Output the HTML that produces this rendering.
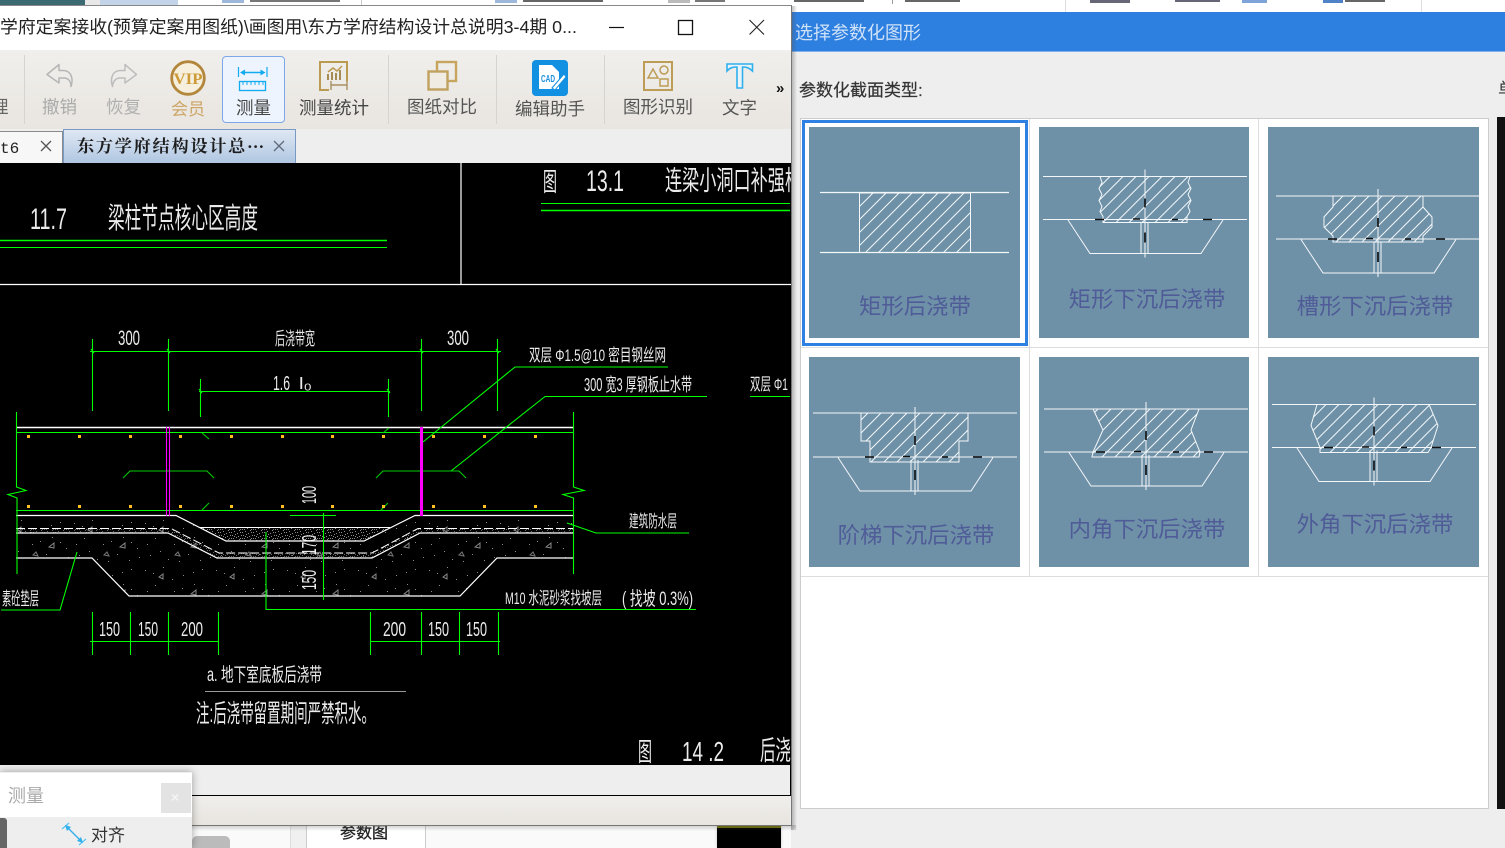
<!DOCTYPE html>
<html lang="zh"><head><meta charset="utf-8"><title>选择参数化图形</title>
<style>
html,body{margin:0;padding:0;background:#eee}
html{width:1505px;height:848px;overflow:hidden}
body{width:1505px;height:848px;overflow:hidden;position:relative;font-family:"Liberation Sans","Noto Sans CJK SC",sans-serif}
div{position:absolute;box-sizing:border-box}
.t{white-space:nowrap;line-height:1}
svg{position:absolute;left:0;top:0;overflow:hidden}
.c text{font-family:"Liberation Sans","WenQuanYi Zen Hei","Noto Sans CJK SC",sans-serif;fill:#fff;fill-opacity:.92}
.lb{font-size:22.4px;fill:#505c98;font-family:"Liberation Sans","WenQuanYi Zen Hei","Noto Sans CJK SC",sans-serif;text-anchor:middle}
</style></head><body>

<!-- background strips -->
<div style="left:0;top:0;width:1505px;height:12px;background:#fff"></div>
<div style="left:0;top:0;width:85px;height:6px;background:#3c6a72"></div>
<div style="left:85px;top:0;width:15px;height:6px;background:#e8e8e8"></div>
<div style="left:100px;top:0;width:78px;height:6px;background:#c3d4e8"></div>
<div style="left:222px;top:0;width:22px;height:3px;background:#9db8da"></div>
<div style="left:250px;top:0;width:90px;height:2px;background:#777"></div>
<div style="left:361px;top:0;width:1px;height:6px;background:#ccc"></div>
<div style="left:495px;top:0;width:22px;height:3px;background:#9db8da"></div>
<div style="left:523px;top:0;width:80px;height:2px;background:#666"></div>
<div style="left:668px;top:0;width:22px;height:3px;background:#bbb"></div>
<div style="left:695px;top:0;width:30px;height:2px;background:#777"></div>
<div style="left:794px;top:0;width:70px;height:2px;background:#666"></div>
<div style="left:892px;top:0;width:1px;height:4px;background:#999"></div>
<div style="left:905px;top:0;width:55px;height:2px;background:#666"></div>
<div style="left:1065px;top:0;width:1px;height:12px;background:#ddd"></div>
<div style="left:1090px;top:0;width:40px;height:3px;background:#667"></div>
<div style="left:1175px;top:0;width:45px;height:2px;background:#667"></div>
<div style="left:1242px;top:0;width:25px;height:3px;background:#7ea3d8"></div>
<div style="left:1323px;top:0;width:20px;height:3px;background:#4f82c8"></div>
<div style="left:1345px;top:0;width:40px;height:2px;background:#666"></div>
<div style="left:1421px;top:0;width:1px;height:12px;background:#ddd"></div>

<!-- dialog -->
<div style="left:791px;top:12px;width:714px;height:836px;background:#eee"></div>
<div style="left:791px;top:12px;width:714px;height:40px;background:#2d7fe0;border-bottom:1px solid #7db0ec"></div>
<div class="t" style="left:795px;top:24px;font-size:18px;color:#cfe2f8">选择参数化图形</div>
<div class="t" style="left:799px;top:82px;font-size:17px;color:#333;-webkit-text-stroke:.2px #333">参数化截面类型:</div>
<div class="t" style="left:1498px;top:81px;font-size:17px;color:#333">单</div>
<div style="left:1497px;top:117px;width:8px;height:692px;background:#111"></div>
<div style="left:800px;top:118px;width:689px;height:691px;background:#fff;border:1px solid #ccc"></div>
<div style="left:1029px;top:119px;width:1px;height:457px;background:#ddd"></div>
<div style="left:1258px;top:119px;width:1px;height:457px;background:#ddd"></div>
<div style="left:801px;top:347px;width:687px;height:1px;background:#ddd"></div>
<div style="left:801px;top:576px;width:687px;height:1px;background:#ddd"></div>
<div style="left:802px;top:120px;width:226px;height:226px;border:3px solid #2e80e2"></div>

<svg width="1505" height="848" viewBox="0 0 1505 848">
<defs>
<pattern id="h" width="13" height="13" patternUnits="userSpaceOnUse"><path d="M-3 16L16-3M-3 3L3-3M10 16L16 10" stroke="#f2f6f8" stroke-width="1" fill="none"/></pattern>
<g id="sub" fill="none" stroke="#f4f7f9" stroke-width="1">
<path d="M-77 .5L-55 34H56L78 .5"/>
<path d="M-4 3V34M3 3V34"/>
<path d="M-102 0H102" stroke-width="1.1"/>
<path d="M0-50V38" />
<path d="M-50 0H-41M-12-.5H-5M27 0H33M58 0H67M0-21V-12M0 13V23" stroke="#111" stroke-width="1.6"/>
</g>
</defs>
<g fill="#6e91a8">
<rect x="809" y="127" width="211" height="211"/><rect x="1039" y="127" width="210" height="211"/><rect x="1268" y="127" width="211" height="211"/>
<rect x="809" y="357" width="211" height="210"/><rect x="1039" y="357" width="210" height="210"/><rect x="1268" y="357" width="211" height="210"/>
</g>
<!-- cell 1 -->
<path d="M820 192.5H1009M820 252.5H1009" stroke="#f4f7f9" fill="none" stroke-width="1.2"/>
<rect x="859.5" y="193" width="111" height="59.5" fill="url(#h)" stroke="#f4f7f9"/>
<text class="lb" x="915" y="314">矩形后浇带</text>
<!-- cell 2 -->
<g transform="translate(1145,219.5)"><path d="M-102-43H102" stroke="#f4f7f9" fill="none"/>
<path d="M-45-43L-43-37-46-31-43-25-46-19-43-13-45-8-42-3-42 3H42V-3L45-8 43-13 46-19 43-25 46-31 43-37 45-43Z" fill="url(#h)" stroke="#f4f7f9"/><use href="#sub"/></g>
<text class="lb" x="1147" y="307">矩形下沉后浇带</text>
<!-- cell 3 -->
<g transform="translate(1378,239)"><path d="M-102-43H102" stroke="#f4f7f9" fill="none"/>
<path d="M-45-43V-32L-54-22V-12L-45-3V3H45V-3L54-12V-22L45-32V-43Z" fill="url(#h)" stroke="#f4f7f9"/><use href="#sub"/></g>
<rect x="1479" y="190" width="4" height="55" fill="#fff"/>
<text class="lb" x="1375" y="314">槽形下沉后浇带</text>
<!-- cell 4 -->
<g transform="translate(915,457)"><path d="M-102-44H102" stroke="#f4f7f9" fill="none"/>
<path d="M-54-44V-16H-45V5H44V-16H53V-44Z" fill="url(#h)" stroke="#f4f7f9"/><use href="#sub"/></g>
<text class="lb" x="916" y="543">阶梯下沉后浇带</text>
<!-- cell 5 -->
<g transform="translate(1146,452)"><path d="M-102-43H102" stroke="#f4f7f9" fill="none"/>
<path d="M-53-43H53L45-22 54 0 53 5H-54L-53 0-43-22Z" fill="url(#h)" stroke="#f4f7f9"/><use href="#sub"/></g>
<text class="lb" x="1147" y="537">内角下沉后浇带</text>
<!-- cell 6 -->
<g transform="translate(1374,447.5)"><path d="M-102-43H102" stroke="#f4f7f9" fill="none"/>
<path d="M-57-43H55L64-22 57 0 54 5H-54V0L-63-22Z" fill="url(#h)" stroke="#f4f7f9"/><use href="#sub"/></g>
<text class="lb" x="1375" y="532">外角下沉后浇带</text>
</svg>

<!-- below-window bits -->
<div style="left:0;top:825px;width:791px;height:23px;background:#fafafa"></div>
<div style="left:192px;top:836px;width:38px;height:12px;background:#bbb;border-radius:5px 5px 0 0"></div>
<div style="left:290px;top:825px;width:16px;height:23px;background:#f0f0f0;border-left:1px solid #ddd"></div>
<div style="left:306px;top:825px;width:120px;height:23px;background:#fff;border:1px solid #ccc;border-bottom:0"></div>
<div class="t" style="left:340px;top:826px;font-size:16px;color:#222;-webkit-text-stroke:.3px #222">参数图</div>
<div style="left:717px;top:825px;width:64px;height:23px;background:#000;border-top:3px solid #6b6b00;box-shadow:0 0 3px #ccc"></div>
<div style="left:791px;top:6px;width:6px;height:824px;background:linear-gradient(90deg,rgba(90,90,90,.45),rgba(140,140,140,0))"></div>
<div style="left:0;top:825px;width:796px;height:6px;background:linear-gradient(180deg,rgba(90,90,90,.3),rgba(140,140,140,0))"></div>

<!-- main window -->
<div style="left:0;top:5px;width:792px;height:821px;background:#eee;border-right:1px solid #777;border-top:1px solid #888;border-bottom:1px solid #777"></div>
<div style="left:0;top:6px;width:791px;height:44px;background:#fff;overflow:hidden">
 <div class="t" style="left:0;top:13px;font-size:17.85px;color:#222">学府定案接收(预算定案用图纸)\画图用\东方学府结构设计总说明3-4期 0...</div>
</div>
<div style="left:0;top:50px;width:791px;height:79px;background:linear-gradient(180deg,#f0efec,#e9e5e0)"></div>
<div style="left:222px;top:56px;width:63px;height:67px;background:#edf4fd;border:1px solid #7ca8ea;border-radius:4px"></div>
<div style="left:0;top:131px;width:63px;height:33px;background:#f7f7f7;border:1px solid #8a8a8a;border-left:0"></div>
<div style="left:63px;top:129px;width:233px;height:35px;background:linear-gradient(180deg,#dfe8f3,#aec5e1);border:1px solid #7a9ac6;border-bottom:0"></div>
<div class="t" style="left:0;top:141px;font-family:'Liberation Mono',monospace;font-size:16px;color:#222">t6</div>
<div class="t" style="left:77px;top:138px;font-family:'Liberation Serif','Noto Serif CJK SC',serif;font-weight:700;font-size:17.2px;letter-spacing:1.7px;color:#1d1d1d">东方学府结构设计总<span style="letter-spacing:0">···</span></div>

<div class="t" style="left:-9px;top:99px;font-size:17.5px;color:#666">理</div>
<div class="t" style="left:42px;top:99px;font-size:17.5px;color:#aaa">撤销</div>
<div class="t" style="left:106px;top:99px;font-size:17.5px;color:#b0b0b0">恢复</div>
<div class="t" style="left:171px;top:101px;font-size:17px;color:#cda566">会员</div>
<div class="t" style="left:236px;top:100px;font-size:17.5px;color:#444">测量</div>
<div class="t" style="left:299px;top:100px;font-size:17.5px;color:#444">测量统计</div>
<div class="t" style="left:407px;top:99px;font-size:17.5px;color:#555">图纸对比</div>
<div class="t" style="left:515px;top:101px;font-size:17.5px;color:#555">编辑助手</div>
<div class="t" style="left:623px;top:99px;font-size:17.5px;color:#555">图形识别</div>
<div class="t" style="left:722px;top:100px;font-size:17.5px;color:#555">文字</div>
<div class="t" style="left:776px;top:81px;font-size:15px;font-weight:700;color:#111">»</div>

<svg width="1505" height="848" viewBox="0 0 1505 848" style="pointer-events:none">
<!-- window buttons -->
<path d="M609 27.5H624" stroke="#111" stroke-width="1.2"/>
<rect x="678.5" y="20.5" width="14" height="14" fill="none" stroke="#111" stroke-width="1.3"/>
<path d="M749.5 20L764 34.5M764 20L749.5 34.5" stroke="#222" stroke-width="1.1"/>
<!-- separators -->
<path d="M24.5 55V124M388.5 55V124M496.5 55V124M604.5 55V124" stroke="#d6d4d1"/>
<!-- undo redo -->
<path d="M59 64.5L47 74.5L59 83V78H64C68 78 71 81 71 86.5C73.5 79 71.5 70.5 63 70.5H59Z" fill="none" stroke="#b5b5b5" stroke-width="1.5" stroke-linejoin="round"/>
<path d="M125 64.5L136.5 74.5L125 83V78H120C116 78 113 81 112.5 86.5C110 79 112 70.5 120.5 70.5H125Z" fill="none" stroke="#bdbdbd" stroke-width="1.5" stroke-linejoin="round"/>
<!-- VIP -->
<circle cx="188" cy="78" r="16.3" fill="#f6efdd" stroke="#b3873b" stroke-width="2.8"/>
<text x="188" y="84" text-anchor="middle" font-family="Liberation Serif,serif" font-weight="700" font-size="16" fill="#cc9a36" textLength="29" lengthAdjust="spacingAndGlyphs">VIP</text>
<!-- measure -->
<g fill="none" stroke="#14aaf0">
<path d="M238.5 67V77M267 67V77" stroke-width="1.2"/><path d="M243 72.5H262" stroke-width="1.4"/>
<rect x="239.5" y="81.5" width="26" height="9" stroke-width="1.3"/>
<path d="M243 81.5V85M247 81.5V85M251 81.5V85M255 81.5V85M259 81.5V85M263 81.5V85"/>
</g>
<path d="M240 72.5L245 69.5V75.5ZM265.5 72.5L260.5 69.5V75.5Z" fill="#14aaf0"/>
<!-- stats -->
<g fill="none" stroke="#bb9a52" stroke-width="2">
<path d="M320 78V62H347V78M320 78V90H329"/>
<path d="M328 72L333 68L337 71L342 66" stroke-width="1.5"/>
<path d="M347 78V81" />
</g>
<path d="M327 74h2v6h-2zM331 72h2v8h-2zM335 73h2v7h-2zM339 70h2v10h-2z" fill="#a68b55"/>
<path d="M331 85H347M331 81V90M347 81V90" stroke="#a89060" stroke-width="1.4" fill="none"/>
<!-- compare -->
<rect x="437" y="62" width="19" height="19" fill="none" stroke="#c7a55f" stroke-width="2.4"/>
<rect x="428.5" y="71.5" width="19" height="18" fill="#f0ece4" stroke="#c0a15e" stroke-width="2.4"/>
<!-- CAD icon -->
<rect x="532" y="60" width="36" height="36" rx="4" fill="#1290e2"/>
<path d="M539 65H552L559 72V89H539Z" fill="#fff"/>
<text x="541" y="82" font-family="Liberation Sans,sans-serif" font-weight="700" font-size="10" fill="#1a8fe0" textLength="14" lengthAdjust="spacingAndGlyphs">CAD</text>
<path d="M552 88L564 74L566 77L555 90Z" fill="#fff" stroke="#1290e2"/>
<!-- shapes -->
<rect x="644" y="62" width="28" height="28" fill="none" stroke="#bd9c55" stroke-width="2"/>
<path d="M648 78L653 69L658 78Z" fill="none" stroke="#bd9c55" stroke-width="1.5"/>
<circle cx="664" cy="70" r="4" fill="none" stroke="#bd9c55" stroke-width="1.5"/>
<rect x="660" y="79" width="8" height="7" fill="none" stroke="#bd9c55" stroke-width="1.5"/>
<!-- T -->
<path d="M727 64H752.5V71C749 67.5 746 67 742.5 67V88H737V67C733 67 730 67.5 727 71Z" fill="#e9f3f8" stroke="#2fb0ee" stroke-width="1.6"/>
<!-- tab close -->
<path d="M41 141L51 151M51 141L41 151" stroke="#555" stroke-width="1.3"/>
<path d="M274 141L284 151M284 141L274 151" stroke="#5f6a7a" stroke-width="1.3"/>
<!-- grip -->
<path d="M769.5 798V823" stroke="#d9d7d3"/>
<path d="M785 812h3v3h-3zM781 816h3v3h-3zM785 816h3v3h-3zM778 820h3v3h-3zM782 820h3v3h-3zM785 820h3v3h-3z" fill="#b5b5b5"/>
</svg>

<!-- canvas -->
<div style="left:0;top:163px;width:791px;height:602px;background:#000"></div>
<div style="left:0;top:795px;width:791px;height:1px;background:#000"></div>
<div style="left:0;top:796px;width:790px;height:29px;background:linear-gradient(180deg,#f0efec,#e8e4df)"></div>
<div style="left:790px;top:765px;width:1px;height:31px;background:#000"></div>

<svg class="c" width="791" height="848" viewBox="0 0 791 848">
<defs>
<pattern id="d" width="11" height="9" patternUnits="userSpaceOnUse"><path d="M0 1h1v1H0zM3 0h1v1H3zM6 2h1v1H6zM9 1h1v1H9zM1 4h1v1H1zM4 3h1v1H4zM7 5h1v1H7zM10 4h1v1h-1zM2 7h1v1H2zM5 6h1v1H5zM8 8h1v1H8zM0 7h1v1H0zM9 7h1v1H9zM3 5h1v1H3z" fill="#8a8a8a"/></pattern>
<pattern id="s" width="71" height="47" patternUnits="userSpaceOnUse"><path d="M3 6h1v1H3zM21 3h1v1h-1zM41 11h1v1h-1zM60 5h1v1h-1zM13 21h1v1h-1zM32 27h1v1h-1zM52 20h1v1h-1zM66 31h1v1h-1zM8 38h1v1H8zM26 42h1v1h-1zM46 37h1v1h-1zM58 43h1v1h-1zM11 9h1v1h-1zM30 15h1v1h-1zM51 8h1v1h-1zM5 27h1v1H5zM40 24h1v1h-1zM60 25h1v1h-1zM18 34h1v1h-1zM37 44h1v1h-1zM68 40h1v1h-1z" fill="#8a8a8a"/>
<path d="M17 13l4-3v5zM49 30l5-4v5z" fill="none" stroke="#888"/><path d="M33 38l3-3 2 4z" fill="none" stroke="#777"/></pattern>
</defs>
<path d="M16 516H176L226 542H364L415 516H573V558H497L460 596H129L92 558H16Z" fill="url(#s)"/>
<path d="M200 528H390L364 541H226Z" fill="url(#d)"/>
<path d="M16 529H171L219 553H372L418 529H573V533H420L372 558H217L168 533H16Z" fill="url(#d)" opacity=".75"/>

<g fill="none" stroke="#fff">
<path d="M461 163V284M0 284.5H791" stroke-width="1.2"/>
<path d="M16 427.5H573" stroke-width="1.4"/>
<path d="M16 515.5H176L226 541H364L415 515.5H573" stroke-width="1.2"/>
<path d="M200 527.5H390" stroke-width="1.1"/>
<path d="M16 533H168L217 558H372L420 533H573" stroke-width="1.2"/>
<path d="M16 558H92L129 596H460L497 558H573" stroke-width="1.2"/>
<path d="M16 528.5H171L219 553H372L418 528.5H573" stroke-width="1" stroke-dasharray="9 3"/>
<path d="M205 691.5H406" stroke="#999"/>
</g>

<g fill="none" stroke="#0f0" stroke-width="1.1">
<path d="M0 240.5H387" stroke-width="1.6"/><path d="M0 247.5H387"/>
<path d="M541 203.5H790" /><path d="M541 210.5H790" stroke-width="1.5"/>
<path d="M90 351.5H501M92.5 339V411M168.5 339V411M421.5 339V411M497.5 339V411"/>
<path d="M199 391.5H390M200.5 379V417M388.5 379V417"/>
<path d="M91 349L94 353M167 349L170 353M420 349L423 353M496 349L499 353M199 389L202 393M387 389L390 393"/>
<path d="M16.5 412V487L26 490.5 8 494.5 17 498V574M573.5 412V487L584 490.5 563 494.5 573.5 498V574"/>
<path d="M16 432.5H573M16 510.5H573"/>
<path d="M423 442L515 367H668M451 471L545 396.5H707M750 396.5H790"/>
<path d="M123 478L130 471H207L214 478M376 478L383 471H459L466 478" stroke="#0c0"/>
<path d="M202 433L209 439M202 510L209 503M383 433L389 428M381 510L388 503" stroke="#0c0"/>
<path d="M1 610H60L77 552" />
<path d="M266 532V609.5H696"/>
<path d="M290 515.5H336M323.5 513V600"/>
<path d="M567 523L596 533H689"/>
<path d="M90 641.5H219M92.5 612V655M130.5 612V655M168.5 612V655M218.5 612V655"/>
<path d="M370 641.5H500M370.5 612V655M421.5 612V655M459.5 612V655M498.5 612V655"/>
</g>
<path d="M166.5 427V516M169.5 427V516" stroke="#f0f" stroke-width="1.1" fill="none"/>
<path d="M421.5 427V516" stroke="#f0f" stroke-width="3" fill="none"/>
<g fill="#ffc020"><path d="M27 435h3v3h-3zM78 435h3v3h-3zM129 435h3v3h-3zM179 435h3v3h-3zM230 435h3v3h-3zM281 435h3v3h-3zM331 435h3v3h-3zM382 435h3v3h-3zM432 435h3v3h-3zM483 435h3v3h-3zM534 435h3v3h-3z"/>
<path d="M27 505h3v3h-3zM78 505h3v3h-3zM129 505h3v3h-3zM179 505h3v3h-3zM230 505h3v3h-3zM281 505h3v3h-3zM331 505h3v3h-3zM382 505h3v3h-3zM432 505h3v3h-3zM483 505h3v3h-3zM534 505h3v3h-3z"/></g>

<g>
<text x="30" y="229" font-size="30" textLength="37" lengthAdjust="spacingAndGlyphs">11.7</text>
<text x="108" y="228" font-size="29" textLength="150" lengthAdjust="spacingAndGlyphs">梁柱节点核心区高度</text>
<text x="543" y="191" font-size="26" textLength="14" lengthAdjust="spacingAndGlyphs">图</text>
<text x="586" y="191" font-size="30" textLength="38" lengthAdjust="spacingAndGlyphs">13.1</text>
<text x="665" y="190" font-size="27" textLength="137" lengthAdjust="spacingAndGlyphs">连梁小洞口补强柱</text>
<text x="118" y="345" font-size="21" textLength="22" lengthAdjust="spacingAndGlyphs">300</text>
<text x="275" y="345" font-size="18" textLength="40" lengthAdjust="spacingAndGlyphs">后浇带宽</text>
<text x="447" y="345" font-size="21" textLength="22" lengthAdjust="spacingAndGlyphs">300</text>
<text x="273" y="390" font-size="20" textLength="17" lengthAdjust="spacingAndGlyphs">1.6</text>
<text x="299" y="389" font-size="17" textLength="13" lengthAdjust="spacingAndGlyphs">l₀</text>
<text x="529" y="361" font-size="17" textLength="137" lengthAdjust="spacingAndGlyphs">双层 Φ1.5@10  密目钢丝网</text>
<text x="584" y="391" font-size="18" textLength="108" lengthAdjust="spacingAndGlyphs">300 宽3 厚钢板止水带</text>
<text x="750" y="390" font-size="17" textLength="38" lengthAdjust="spacingAndGlyphs">双层 Φ1</text>
<text x="629" y="527" font-size="17" textLength="48" lengthAdjust="spacingAndGlyphs">建筑防水层</text>
<text x="505" y="604" font-size="17" textLength="97" lengthAdjust="spacingAndGlyphs">M10 水泥砂浆找坡层</text>
<text x="622" y="605" font-size="19" textLength="71" lengthAdjust="spacingAndGlyphs">( 找坡 0.3%)</text>
<text x="2" y="605" font-size="18" textLength="37" lengthAdjust="spacingAndGlyphs">素砼垫层</text>
<text transform="translate(316,504) rotate(-90)" font-size="20" textLength="18" lengthAdjust="spacingAndGlyphs">100</text>
<text transform="translate(316,555) rotate(-90)" font-size="20" textLength="20" lengthAdjust="spacingAndGlyphs">170</text>
<text transform="translate(316,590) rotate(-90)" font-size="20" textLength="20" lengthAdjust="spacingAndGlyphs">150</text>
<text x="99" y="636" font-size="20" textLength="21" lengthAdjust="spacingAndGlyphs">150</text>
<text x="138" y="636" font-size="20" textLength="20" lengthAdjust="spacingAndGlyphs">150</text>
<text x="181" y="636" font-size="20" textLength="22" lengthAdjust="spacingAndGlyphs">200</text>
<text x="383" y="636" font-size="20" textLength="23" lengthAdjust="spacingAndGlyphs">200</text>
<text x="428" y="636" font-size="20" textLength="21" lengthAdjust="spacingAndGlyphs">150</text>
<text x="466" y="636" font-size="20" textLength="21" lengthAdjust="spacingAndGlyphs">150</text>
<text x="207" y="681" font-size="19" textLength="115" lengthAdjust="spacingAndGlyphs">a. 地下室底板后浇带</text>
<text x="196" y="722" font-size="25" textLength="179" lengthAdjust="spacingAndGlyphs">注:后浇带留置期间严禁积水。</text>
<text x="638" y="761" font-size="26" textLength="14" lengthAdjust="spacingAndGlyphs">图</text>
<text x="682" y="761" font-size="28" textLength="42" lengthAdjust="spacingAndGlyphs">14 .2</text>
<text x="760" y="760" font-size="27" textLength="31" lengthAdjust="spacingAndGlyphs">后浇</text>
</g>
</svg>

<!-- measure panel -->
<div style="left:0;top:772px;width:192px;height:76px;background:#eee;box-shadow:0 0 8px rgba(0,0,0,.35)"></div>
<div style="left:0;top:773px;width:192px;height:44px;background:#fff"></div>
<div class="t" style="left:8px;top:787px;font-size:18px;color:#aaa">测量</div>
<div style="left:161px;top:783px;width:30px;height:30px;background:#e3e3e3"></div>
<div class="t" style="left:171px;top:790px;font-size:14px;font-weight:700;color:#f4f4f4">×</div>
<div style="left:0;top:818px;width:7px;height:30px;background:#666;border-radius:0 3px 0 0"></div>
<div class="t" style="left:91px;top:827px;font-size:17px;color:#333">对齐</div>
<svg width="1505" height="848" viewBox="0 0 1505 848">
<path d="M62 829L69 823M79 845L86 839" stroke="#5cc6f2" stroke-width="1.3" fill="none"/>
<path d="M67 827L81 841" stroke="#30b0ee" stroke-width="1.3" fill="none"/>
<path d="M65 825L71 827L67 831ZM83 843L77 841L81 837Z" fill="#30b0ee"/>
</svg>
</body></html>
